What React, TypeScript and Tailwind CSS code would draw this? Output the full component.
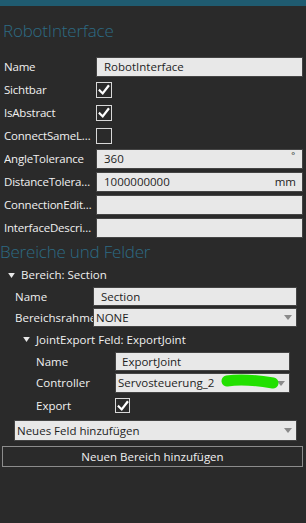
import type { ReactNode } from 'react';

// Property panel for a robot interface, dark theme with light input fields.
const font = { fontFamily: '"Open Sans", "Noto Sans", sans-serif' };

function Check({ size = 'w-[16px] h-[16px]' }: { size?: string }) {
  return (
    <div className={`${size} border border-[#d8d8d8] flex items-center justify-center`}>
      <svg viewBox="0 0 14 14" className="w-[12px] h-[12px]">
        <path d="M2 7.5 L5.5 11 L12 2.5" fill="none" stroke="#ffffff" strokeWidth="2.6" strokeLinecap="square" />
      </svg>
    </div>
  );
}

function EmptyCheck() {
  return <div className="w-[16px] h-[16px] border border-[#d8d8d8]" />;
}

function Arrow() {
  return (
    <svg viewBox="0 0 8 5" className="w-[8px] h-[5px] shrink-0">
      <polygon points="0,0 8,0 4,5" fill="#8a8a8a" />
    </svg>
  );
}

function TreeArrow() {
  return (
    <svg viewBox="0 0 8 6" className="w-[7px] h-[5px] shrink-0">
      <polygon points="0,0 8,0 4,6" fill="#e8e8e8" />
    </svg>
  );
}

function Field({ children, className = '' }: { children?: ReactNode; className?: string }) {
  return (
    <div
      className={`flex-1 h-[20px] bg-[#e8e8e8] border border-[#444] flex items-center text-[11.5px] text-[#1e1e1e] ${className}`}
    >
      {children}
    </div>
  );
}

function Row({ label, children }: { label: string; children: ReactNode }) {
  return (
    <div className="h-[23px] flex items-center pl-[4px] pr-[3px]">
      <div className="w-[92px] shrink-0 truncate pr-[3px] text-[#f0f0f0] tracking-[-0.2px]">{label}</div>
      <div className="flex-1 flex items-center">{children}</div>
    </div>
  );
}

export default function App() {
  return (
    <div className="w-[306px] h-[523px] bg-[#2a2a2a] text-[11.5px] overflow-hidden" style={font}>
      <div className="h-[6px] bg-[#1f5b70]" />
      <div className="h-[49px] flex items-center pl-[3px] text-[17px] font-light text-[#2d6b84] tracking-[-0.2px]">
        RobotInterface
      </div>

      <Row label="Name">
        <Field className="pl-[7px]">RobotInterface</Field>
      </Row>
      <Row label="Sichtbar">
        <Check />
      </Row>
      <Row label="IsAbstract">
        <Check />
      </Row>
      <Row label="ConnectSameLevel">
        <EmptyCheck />
      </Row>
      <Row label="AngleTolerance">
        <Field className="pl-[7px] pr-[7px] justify-between">
          <span>360</span>
          <span className="self-start text-[9px] leading-[12px]">°</span>
        </Field>
      </Row>
      <Row label="DistanceTolerance">
        <Field className="pl-[7px] pr-[6px] justify-between">
          <span>1000000000</span>
          <span>mm</span>
        </Field>
      </Row>
      <Row label="ConnectionEditor">
        <Field />
      </Row>
      <Row label="InterfaceDescription">
        <Field />
      </Row>

      <div className="h-[25px] flex items-center text-[17px] font-light text-[#2d6b84] tracking-[-0.2px] whitespace-nowrap">
        Bereiche und Felder
      </div>

      <div className="h-[22px] flex items-center gap-[6px] pl-[8px] text-[#f0f0f0]">
        <TreeArrow />
        <span>Bereich: Section</span>
      </div>
      <div className="h-[21px] flex items-center pl-[15px] pr-[9px]">
        <div className="w-[78px] shrink-0 overflow-hidden whitespace-nowrap text-[#f0f0f0]">Name</div>
        <div className="flex-1 h-[19px] bg-[#e8e8e8] border border-[#444] flex items-center pl-[7px] text-[#1e1e1e]">
          Section
        </div>
      </div>
      <div className="h-[21px] flex items-center pl-[15px] pr-[9px]">
        <div className="w-[78px] shrink-0 overflow-hidden whitespace-nowrap text-[#f0f0f0]">Bereichsrahmen</div>
        <div className="flex-1 h-[19px] bg-[#e8e8e8] border border-[#444] flex items-center justify-between pl-[2px] pr-[4px] text-[#1e1e1e]">
          <span>NONE</span>
          <Arrow />
        </div>
      </div>

      <div className="h-[23px] flex items-center gap-[6px] pl-[23px] text-[#f0f0f0] whitespace-nowrap">
        <TreeArrow />
        <span>JointExport Feld: ExportJoint</span>
      </div>
      <div className="h-[21px] flex items-center pl-[36px] pr-[16px]">
        <div className="w-[79px] shrink-0 overflow-hidden whitespace-nowrap text-[#f0f0f0]">Name</div>
        <div className="flex-1 h-[19px] bg-[#e8e8e8] border border-[#444] flex items-center pl-[6px] text-[#1e1e1e]">
          ExportJoint
        </div>
      </div>
      <div className="h-[22px] flex items-center pl-[36px] pr-[16px]">
        <div className="w-[79px] shrink-0 overflow-hidden whitespace-nowrap text-[#f0f0f0]">Controller</div>
        <div className="relative flex-1 h-[20px] bg-[#e8e8e8] border border-[#444] flex items-center justify-between pl-[2px] pr-[4px] text-[#1e1e1e]">
          <span>Servosteuerung_2</span>
          <Arrow />
          <svg viewBox="0 0 58 16" className="absolute left-[105px] top-[0px] w-[58px] h-[16px]">
            <path d="M6 7 C 18 5, 34 6, 52 9" fill="none" stroke="#22e000" strokeWidth="11" strokeLinecap="round" />
          </svg>
        </div>
      </div>
      <div className="h-[23px] flex items-center pl-[36px]">
        <div className="w-[79px] shrink-0 text-[#f0f0f0]">Export</div>
        <Check size="w-[15px] h-[15px]" />
      </div>

      <div className="mt-[3px] ml-[14px] mr-[9px] h-[21px] bg-[#e8e8e8] border border-[#444] flex items-center justify-between pl-[2px] pr-[4px] text-[#1e1e1e]">
        <span>Neues Feld hinzufügen</span>
        <Arrow />
      </div>
      <div className="mt-[5px] ml-[2px] mr-[3px] h-[21px] border border-[#8c8c8c] flex items-center justify-center text-[#f0f0f0]">
        Neuen Bereich hinzufügen
      </div>
    </div>
  );
}
